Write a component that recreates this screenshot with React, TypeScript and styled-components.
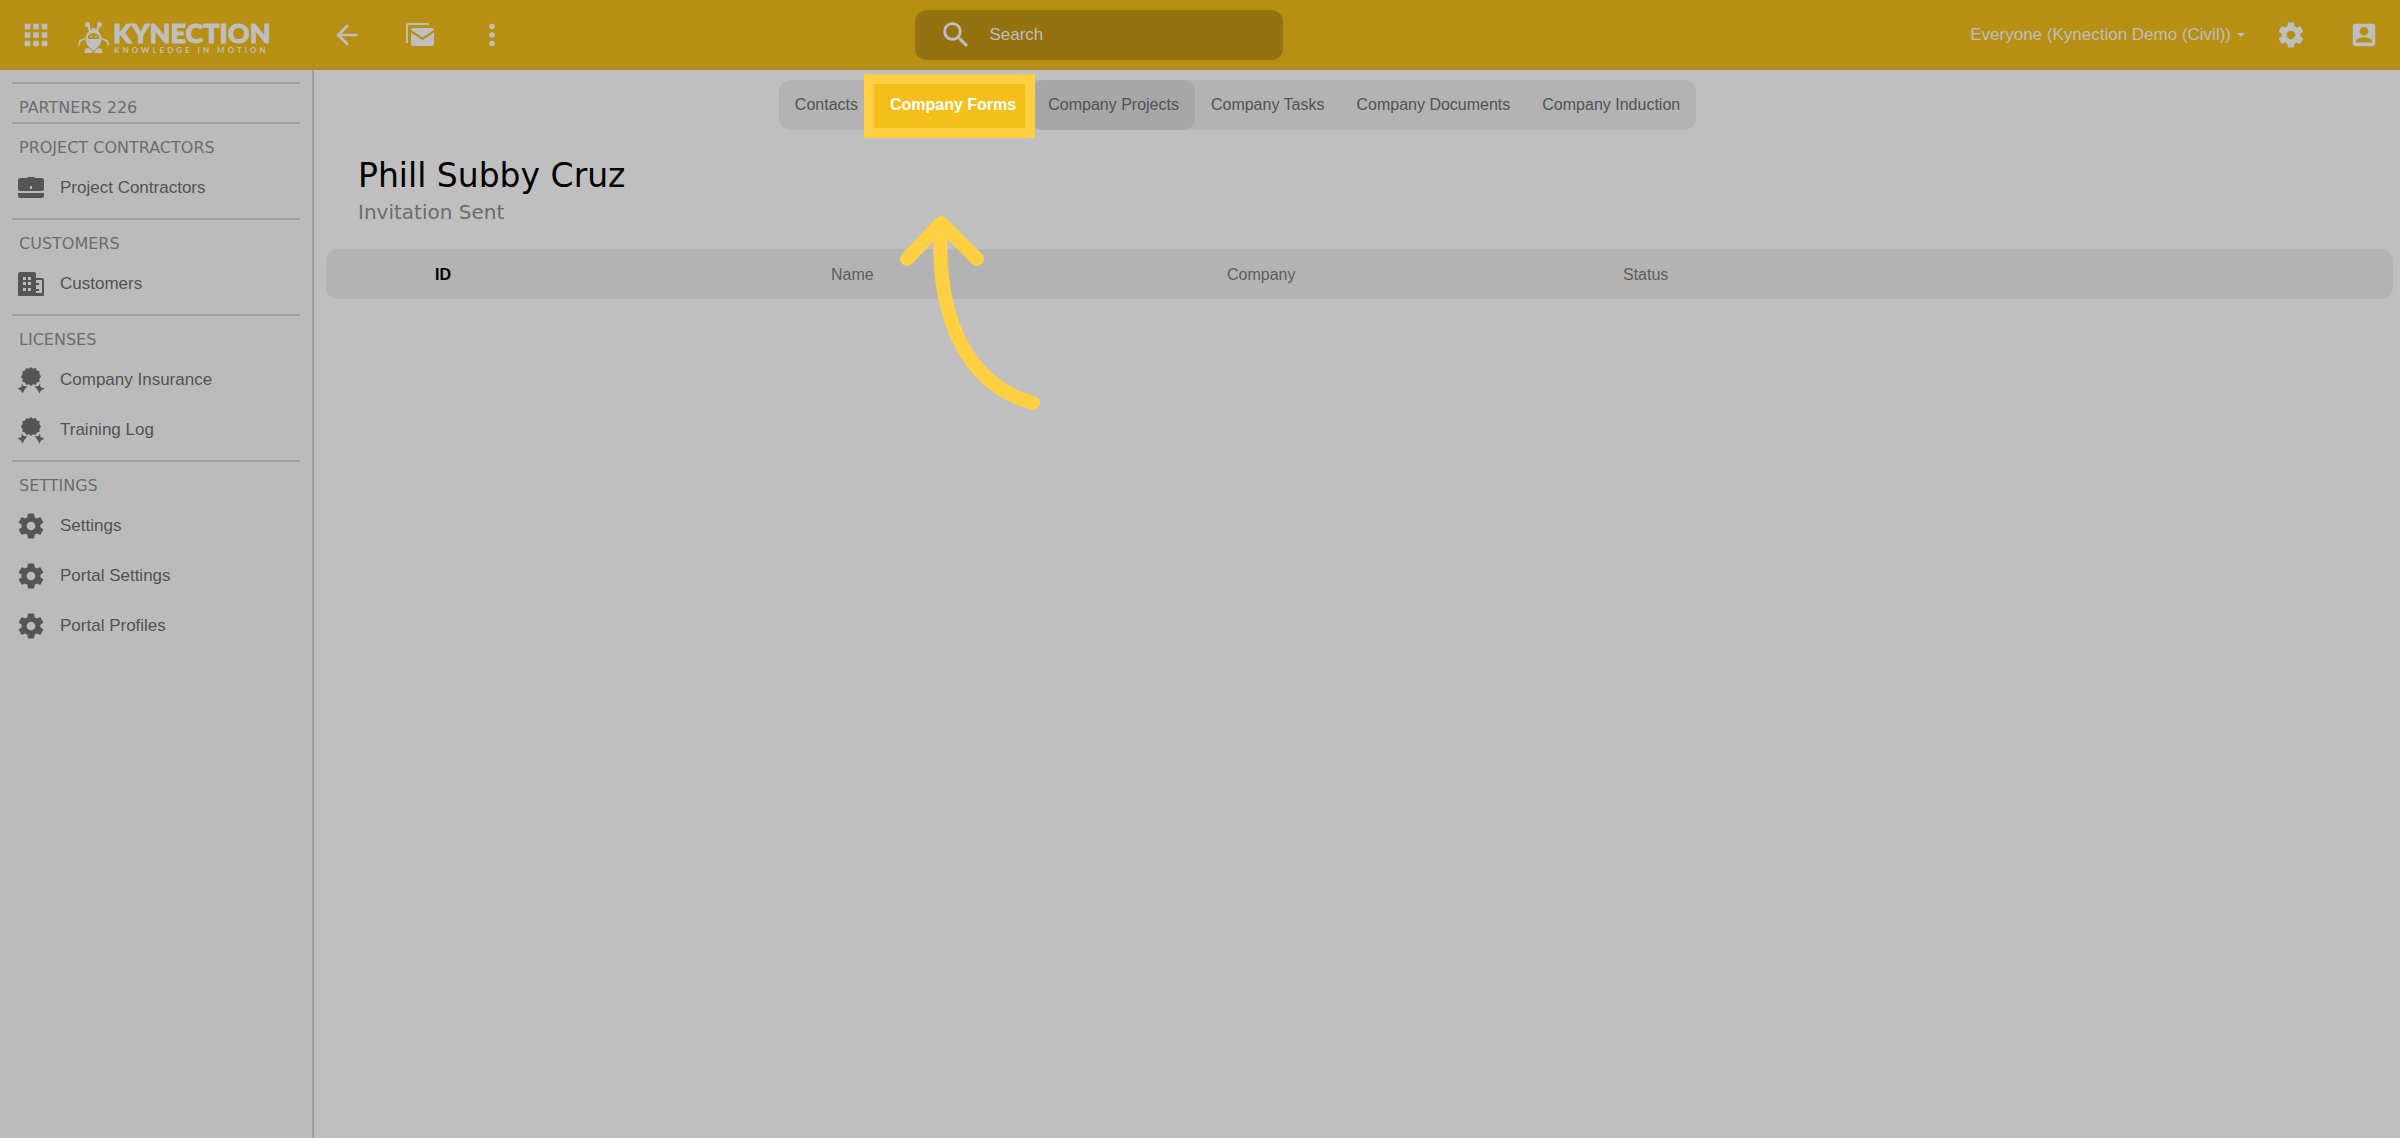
import React from "react";
import styled, { createGlobalStyle, css } from "styled-components";

const arial = 'Arial, "Liberation Sans", sans-serif';
const verdana = '"DejaVu Sans", sans-serif';

const GlobalStyle = createGlobalStyle`
  *, *::before, *::after { box-sizing: border-box; }
  html, body { margin: 0; }
  body { background: #bfbfbf; color: #525252; font-family: ${arial}; font-size: 16px; }
  button, input { font: inherit; color: inherit; }
  a { color: inherit; text-decoration: none; }
`;

const Page = styled.div`
  display: flex;
  flex-direction: column;
  min-height: 100vh;
`;

const Header = styled.header`
  display: grid;
  grid-template-columns: 9fr 368px 11fr;
  align-items: center;
  height: 70px;
  padding: 1px 21px 0 19px;
  background: #b78f13;
  border-bottom: 1px solid #9a8850;
  color: #bfbfbf;
`;

const HeaderGroup = styled.div<{ $end?: boolean }>`
  display: flex;
  align-items: center;
  justify-content: ${(p) => (p.$end ? "flex-end" : "flex-start")};
`;

const IconButton = styled.button<{ $before?: number }>`
  display: flex;
  padding: 0;
  margin-left: ${(p) => p.$before ?? 0}px;
  border: 0;
  background: none;
  cursor: pointer;
`;

const Brand = styled.a`
  display: flex;
  align-items: center;
  margin-left: 24px;
`;

const SearchBox = styled.label`
  display: flex;
  align-items: center;
  gap: 16px;
  height: 50px;
  padding: 0 24px;
  border-radius: 12px;
  background: #93720f;
`;

const SearchInput = styled.input`
  flex: 1;
  min-width: 0;
  padding: 0;
  border: 0;
  outline: 0;
  background: none;
  font-size: 17px;
  &::placeholder { color: #bfbfbf; opacity: 1; }
`;

const AccountButton = styled.button`
  display: flex;
  align-items: center;
  gap: 6px;
  padding: 0;
  border: 0;
  background: none;
  font-size: 17px;
  line-height: 20px;
  cursor: pointer;
`;

const Caret = styled.span`
  border: 4px solid transparent;
  border-top-color: currentColor;
  border-bottom: 0;
`;

const Body = styled.div`
  display: flex;
  flex: 1;
`;

const Sidebar = styled.nav`
  flex: none;
  width: 314px;
  padding: 12px 12px 0;
  background: #bbbbbb;
  border-right: 2px solid #a0a0a0;
`;

const Section = styled.section`
  padding-bottom: 6px;
  border-top: 2px solid #9f9f9f;
`;

const SectionTitle = styled.h2<{ $solo?: boolean }>`
  margin: 0;
  padding: 14px 7px 4px;
  ${(p) => p.$solo && css`padding-bottom: 0; margin-bottom: -2px;`}
  color: #6c6c6c;
  font: 400 16px/20px ${verdana};
`;

const NavLink = styled.a`
  display: flex;
  align-items: center;
  gap: 14px;
  height: 50px;
  padding: 2px 4px 0;
  font-size: 17px;
  & > svg { color: #555; }
`;

const Main = styled.main`
  flex: 1;
  min-width: 0;
  padding: 10px 7px 0 12px;
`;

const TabRow = styled.div`
  display: flex;
  justify-content: center;
  padding-right: 244px;
`;

const Tabs = styled.div`
  display: flex;
  border-radius: 12px;
  background: #b3b3b3;
`;

const Tab = styled.button<{ $current?: boolean; $spot?: boolean }>`
  position: relative;
  height: 50px;
  padding: 0 16px;
  border: 0;
  border-radius: 12px;
  background: ${(p) => (p.$current ? "#a7a7a7" : "none")};
  line-height: 20px;
  white-space: nowrap;
  cursor: pointer;
  ${(p) => p.$spot && css`
    z-index: 1;
    color: #fff;
    font-weight: 700;
    &::before {
      content: "";
      position: absolute;
      z-index: -1;
      inset: -6px -3px -8px -10px;
      border: 10px solid #ffd142;
      background: #f5bf1a;
    }
  `}
`;

const PointerArrow = styled.svg`
  position: absolute;
  top: 133px;
  left: 22px;
  pointer-events: none;
`;

const Heading = styled.header`
  padding: 26px 32px 21px;
`;

const Name = styled.h1`
  margin: 0;
  color: #000;
  font: 400 33px/40px ${verdana};
`;

const Subtitle = styled.p`
  margin: 0;
  color: #6c6c6c;
  font: 400 20px/32px ${verdana};
`;

const Table = styled.table`
  width: 100%;
  table-layout: fixed;
  border-spacing: 0;
  background: #b3b3b3;
  border-radius: 12px;
`;

const Th = styled.th<{ $sorted?: boolean }>`
  height: 50px;
  padding: 1px 0 0 1px;
  text-align: left;
  font-weight: ${(p) => (p.$sorted ? 700 : 400)};
  color: ${(p) => (p.$sorted ? "#000" : "#5c5c5c")};
`;

const Lead = styled.col` width: 108px; `;
const DataCol = styled.col` width: 396px; `;

const paths = {
  back: "M20 11H7.83l5.59-5.59L12 4l-8 8 8 8 1.41-1.41L7.83 13H20v-2z",
  more: "M12 8c1.1 0 2-.9 2-2s-.9-2-2-2-2 .9-2 2 .9 2 2 2zm0 2c-1.1 0-2 .9-2 2s.9 2 2 2 2-.9 2-2-.9-2-2-2zm0 6c-1.1 0-2 .9-2 2s.9 2 2 2 2-.9 2-2-.9-2-2-2z",
  apps: "M4 8h4V4H4v4zm6 12h4v-4h-4v4zm-6 0h4v-4H4v4zm0-6h4v-4H4v4zm6 0h4v-4h-4v4zm6-10v4h4V4h-4zm-6 4h4V4h-4v4zm6 6h4v-4h-4v4zm0 6h4v-4h-4v4z",
  search: "M15.5 14h-.79l-.28-.27C15.41 12.59 16 11.11 16 9.5 16 5.91 13.09 3 9.5 3S3 5.91 3 9.5 5.91 16 9.5 16c1.61 0 3.09-.59 4.23-1.57l.27.28v.79l5 4.99L20.49 19l-4.99-5zm-6 0C7.01 14 5 11.99 5 9.5S7.01 5 9.5 5 14 7.01 14 9.5 11.99 14 9.5 14z",
  gear: "M19.43 12.98c.04-.32.07-.64.07-.98s-.03-.66-.07-.98l2.11-1.65c.19-.15.24-.42.12-.64l-2-3.46c-.12-.22-.39-.3-.61-.22l-2.49 1c-.52-.4-1.08-.73-1.69-.98l-.38-2.65C14.46 2.18 14.25 2 14 2h-4c-.25 0-.46.18-.49.42l-.38 2.65c-.61.25-1.17.59-1.69.98l-2.49-1c-.23-.09-.49 0-.61.22l-2 3.46c-.13.22-.07.49.12.64l2.11 1.65c-.04.32-.07.65-.07.98s.03.66.07.98l-2.11 1.65c-.19.15-.24.42-.12.64l2 3.46c.12.22.39.3.61.22l2.49-1c.52.4 1.08.73 1.69.98l.38 2.65c.03.24.24.42.49.42h4c.25 0 .46-.18.49-.42l.38-2.65c.61-.25 1.17-.59 1.69-.98l2.49 1c.23.09.49 0 .61-.22l2-3.46c.12-.22.07-.49-.12-.64l-2.11-1.65zM12 15.5c-1.93 0-3.5-1.57-3.5-3.5s1.57-3.5 3.5-3.5 3.5 1.57 3.5 3.5-1.57 3.5-3.5 3.5z",
  account: "M3 5v14c0 1.1.89 2 2 2h14c1.1 0 2-.9 2-2V5c0-1.1-.9-2-2-2H5c-1.11 0-2 .9-2 2zm12.500 4c0 1.930-1.570 3.500-3.500 3.500s-3.500-1.570-3.500-3.500 1.570-3.500 3.500-3.500 3.500 1.570 3.500 3.500zm-10 8c0-2.200 4.300-3.300 6.500-3.300s6.500 1.100 6.500 3.300v1h-13v-1z",
};

function Icon({ name, size = 30 }: { name: keyof typeof paths; size?: number }) {
  return (
    <svg width={size} height={size} viewBox="0 0 24 24" fill="currentColor" aria-hidden="true">
      <path d={paths[name]} />
    </svg>
  );
}

const MailIcon = () => (
  <svg width="28" height="24" viewBox="0 0 28 24" fill="currentColor" aria-hidden="true">
    <path d="M0 2a2 2 0 0 1 2-2h21v2H2v18H0z" />
    <path d="M7 5h19a2 2 0 0 1 2 2l-11.500 7.500L5 7a2 2 0 0 1 2-2zM5 9.500l11.500 7.500L28 9.500V21a2 2 0 0 1-2 2H7a2 2 0 0 1-2-2z" />
  </svg>
);

const BriefcaseIcon = () => (
  <svg width="30" height="28" viewBox="0 0 30 28" fill="currentColor" aria-hidden="true">
    <path fillRule="evenodd" d="M11 4q0-1 1-1h6q1 0 1 1h7a2 2 0 0 1 2 2v9a2 2 0 0 1-2 2H4a2 2 0 0 1-2-2V6a2 2 0 0 1 2-2zM14 12v3h2v-3zM2 19h26v3a2 2 0 0 1-2 2H4a2 2 0 0 1-2-2z" />
  </svg>
);

const BuildingIcon = () => (
  <svg width="30" height="28" viewBox="0 0 30 28" fill="currentColor" aria-hidden="true">
    <path fillRule="evenodd" d="M4 2h14a2 2 0 0 1 2 2v4h6a2 2 0 0 1 2 2v16H2V4a2 2 0 0 1 2-2zM7 7v3h3V7zM12 7v3h3V7zM7 12v3h3v-3zM12 12v3h3v-3zM7 18v3h3v-3zM12 18v3h3v-3zM20 10v3h3v2h-3v4h3v2h-3v2h6V10z" />
  </svg>
);

const AwardIcon = () => (
  <svg width="30" height="28" viewBox="0 0 30 28" fill="currentColor" aria-hidden="true">
    <path d="M15 1l2 1.700 2.700-.7 1.200 2.400 2.700.8-.2 2.800 1.700 2.500-1.700 2.500.2 2.800-2.700.8-1.200 2.400-2.700-.7-2 1.700-2-1.700-2.700.7-1.200-2.400-2.700-.8.200-2.800-1.700-2.500 1.700-2.500-.2-2.800 2.700-.8L10.300 2l2.700.7z" />
    <path d="M6 17.500l1.500 2.500 4 .5-2.500 2.500-2.500 4.500-1.500-3L1.500 22.500 5.500 21zM24 17.500L22.500 20l-4 .5 2.500 2.500 2.500 4.500 1.500-3 3.500-2-4-1.500z" />
  </svg>
);

const Logo = () => (
  <svg width="196" height="38" viewBox="0 0 196 38" fill="currentColor" role="img" aria-label="Kynection, knowledge in motion">
    <g transform="translate(0 5)">
      <circle cx="10.500" cy="3.500" r="2.500" />
      <circle cx="22.500" cy="3.500" r="2.500" />
      <path d="M10 4l2 7h9l2-7-3 2-1 4-1-3h-3l-1 3-1-4z" />
      <path d="M16.500 9c5 0 8 4 8 9 0 5-4 9-8 12-4-3-8-7-8-12 0-5 3-9 8-9z" />
      <path d="M11 14.500q5.500-5 11 0v3.500h-11z" fill="#b78f13" />
      <circle cx="14" cy="15.500" r="1" />
      <circle cx="19" cy="15.500" r="1" />
      <path d="M8 17.500L3 20 1.500 24.500M25 17.500l5 2.500 1.500 4.500" fill="none" stroke="currentColor" strokeWidth="1.800" />
      <path d="M7.500 32c0-4 2-5 4-5l5 4 5-4c2 0 4 1 4 5h-7l-2-1-2 1z" />
    </g>
    <text x="36" y="27" fontFamily="Lato, sans-serif" fontWeight="900" fontSize="27" stroke="currentColor" strokeWidth="1">KYNECTION</text>
    <text x="37" y="37" fontFamily="Lato, sans-serif" fontWeight="700" fontSize="8" letterSpacing="3">KNOWLEDGE IN MOTION</text>
  </svg>
);

const sections = [
  { title: "Project Contractors", items: [{ label: "Project Contractors", icon: <BriefcaseIcon /> }] },
  { title: "Customers", items: [{ label: "Customers", icon: <BuildingIcon /> }] },
  {
    title: "Licenses",
    items: [
      { label: "Company Insurance", icon: <AwardIcon /> },
      { label: "Training Log", icon: <AwardIcon /> },
    ],
  },
  {
    title: "Settings",
    items: ["Settings", "Portal Settings", "Portal Profiles"].map((label) => ({
      label,
      icon: <Icon name="gear" />,
    })),
  },
];

const tabs = ["Contacts", "Company Forms", "Company Projects", "Company Tasks", "Company Documents", "Company Induction"];

export default function App() {
  return (
    <Page>
      <GlobalStyle />
      <Header>
        <HeaderGroup>
          <IconButton aria-label="Apps"><Icon name="apps" size={34} /></IconButton>
          <Brand href="#"><Logo /></Brand>
          <IconButton $before={58} aria-label="Back"><Icon name="back" size={32} /></IconButton>
          <IconButton $before={43} aria-label="Messages"><MailIcon /></IconButton>
          <IconButton $before={41} aria-label="More"><Icon name="more" size={34} /></IconButton>
        </HeaderGroup>
        <SearchBox>
          <Icon name="search" size={34} />
          <SearchInput type="search" placeholder="Search" aria-label="Search" />
        </SearchBox>
        <HeaderGroup $end>
          <AccountButton>Everyone (Kynection Demo (Civil))<Caret /></AccountButton>
          <IconButton $before={31} aria-label="Settings"><Icon name="gear" /></IconButton>
          <IconButton $before={43} aria-label="Account"><Icon name="account" /></IconButton>
        </HeaderGroup>
      </Header>
      <Body>
        <Sidebar>
          <Section>
            <SectionTitle $solo>PARTNERS 226</SectionTitle>
          </Section>
          {sections.map((s) => (
            <Section key={s.title}>
              <SectionTitle>{s.title.toUpperCase()}</SectionTitle>
              {s.items.map((item) => (
                <NavLink key={item.label} href="#">{item.icon}{item.label}</NavLink>
              ))}
            </Section>
          ))}
        </Sidebar>
        <Main>
          <TabRow>
            <Tabs role="tablist">
              {tabs.map((label) => (
                <Tab
                  key={label}
                  role="tab"
                  aria-selected={label === "Company Projects"}
                  $current={label === "Company Projects"}
                  $spot={label === "Company Forms"}
                >
                  {label}
                  {label === "Company Forms" && (
                    <PointerArrow width="150" height="200" viewBox="0 0 150 200" fill="none" stroke="#ffd142" strokeWidth="14" strokeLinecap="round" strokeLinejoin="round" aria-hidden="true">
                      <path d="M11 46L45 10l36 36M45 10C39 106 72 172 137 190" />
                    </PointerArrow>
                  )}
                </Tab>
              ))}
            </Tabs>
          </TabRow>
          <Heading>
            <Name>Phill Subby Cruz</Name>
            <Subtitle>Invitation Sent</Subtitle>
          </Heading>
          <Table>
            <colgroup>
              <Lead /><DataCol /><DataCol /><DataCol /><col />
            </colgroup>
            <thead>
              <tr>
                <td />
                <Th $sorted>ID</Th>
                <Th>Name</Th>
                <Th>Company</Th>
                <Th>Status</Th>
              </tr>
            </thead>
          </Table>
        </Main>
      </Body>
    </Page>
  );
}
